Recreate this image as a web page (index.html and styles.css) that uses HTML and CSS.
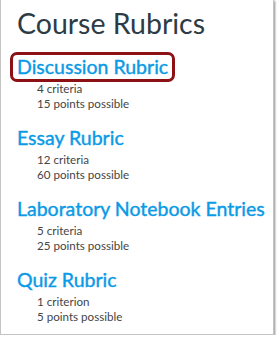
FILE: index.html
```html
<!DOCTYPE html>
<html lang="en">
<head>
  <meta charset="UTF-8" />
  <title>Course Rubrics</title>
  <link rel="stylesheet" href="styles.css">
</head>
<body>
  <div class="panel">
    <h1>Course Rubrics</h1>

    <div class="rubric">
      <a href="#" class="rubric-title highlight">Discussion Rubric</a>
      <div class="rubric-meta">4 criteria</div>
      <div class="rubric-meta">15 points possible</div>
    </div>

    <div class="rubric">
      <a href="#" class="rubric-title">Essay Rubric</a>
      <div class="rubric-meta">12 criteria</div>
      <div class="rubric-meta">60 points possible</div>
    </div>

    <div class="rubric">
      <a href="#" class="rubric-title">Laboratory Notebook Entries</a>
      <div class="rubric-meta">5 criteria</div>
      <div class="rubric-meta">25 points possible</div>
    </div>

    <div class="rubric">
      <a href="#" class="rubric-title">Quiz Rubric</a>
      <div class="rubric-meta">1 criterion</div>
      <div class="rubric-meta">5 points possible</div>
    </div>
  </div>
</body>
</html>
```

FILE: styles.css
```css
:root {
  --text: #2d3b45;
  --meta: #454545;
  --link: #0a9ae6;
  --border: #c4c4c4;
  --highlight: #8c1014;
}

* {
  margin: 0;
  padding: 0;
  box-sizing: border-box;
}

body {
  background: #fff;
  font-family: Lato, "Open Sans", sans-serif;
}

.panel {
  width: 274px;
  height: 335px;
  border: 1px solid var(--border);
  border-top: none;
  box-shadow: 1px 1px 2px rgba(0, 0, 0, 0.45);
  padding: 3px 0 0 16px;
}

h1 {
  font-size: 28.5px;
  font-weight: 400;
  color: var(--text);
  line-height: 40px;
  margin-bottom: 12px;
}

.rubric {
  margin-bottom: 15px;
}

.rubric-title {
  display: inline-block;
  font-size: 19.5px;
  font-weight: 400;
  -webkit-text-stroke: 0.4px var(--link);
  color: var(--link);
  text-decoration: none;
  line-height: 24px;
  white-space: nowrap;
  margin-bottom: 2px;
}

.highlight {
  border: 3px solid var(--highlight);
  border-radius: 7px;
  padding: 0 4px;
  margin: -3px 0 -1px -7px;
}

.rubric-meta {
  font-size: 11.6px;
  color: var(--meta);
  line-height: 15px;
  padding-left: 20px;
}
```
